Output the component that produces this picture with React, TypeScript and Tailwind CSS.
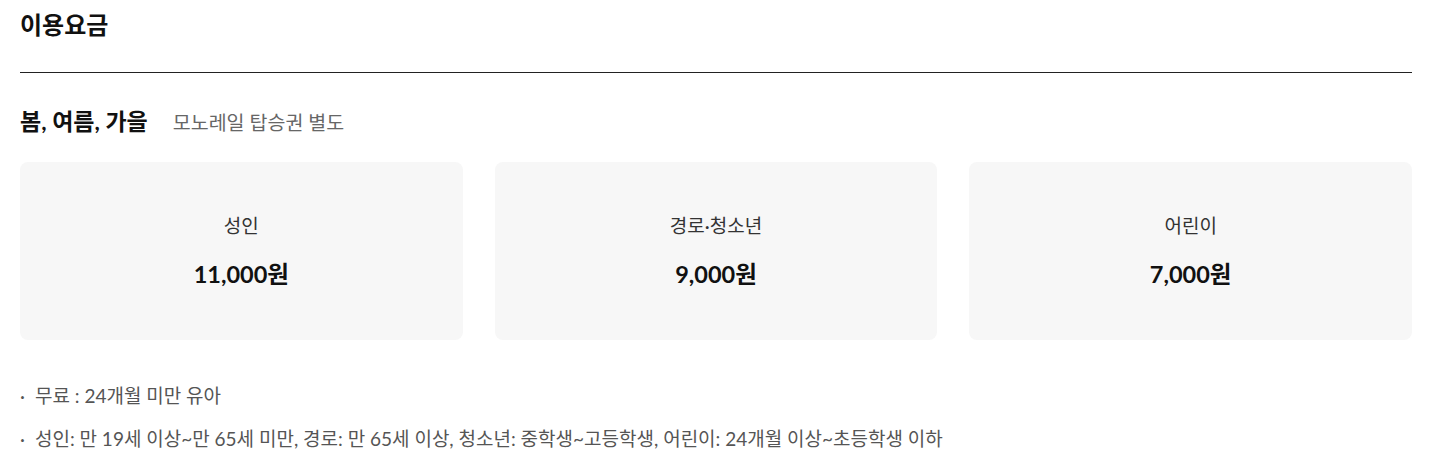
import React from "react";

const font = { fontFamily: "Lato, 'Noto Sans CJK KR', sans-serif" };

const cards = [
  { label: "성인", price: "11,000원" },
  { label: "경로·청소년", price: "9,000원" },
  { label: "어린이", price: "7,000원" },
];

export default function App() {
  return (
    <div className="w-[1435px] h-[474px] bg-white pl-[20px] pr-[23px] text-[#222]" style={font}>
      <h2 className="pt-[8px] text-[24px] font-bold leading-[34px] text-[#111]">이용요금</h2>
      <div className="mt-[30px] h-px bg-[#222]" />
      <div className="mt-[33px] flex items-baseline gap-[25px]">
        <h3 className="text-[23px] font-bold leading-[30px] text-[#111]">봄, 여름, 가을</h3>
        <span className="text-[19.5px] text-[#666]">모노레일 탑승권 별도</span>
      </div>
      <div className="mt-[25px] grid grid-cols-3 gap-[32px]">
        {cards.map((c) => (
          <div key={c.label} className="h-[178px] rounded-[8px] bg-[#f7f7f7] flex flex-col items-center justify-center">
            <div className="text-[19px] leading-[26px] text-[#333]">{c.label}</div>
            <div className="mt-[20px] text-[23.5px] font-bold leading-[30px] text-[#111]">{c.price}</div>
          </div>
        ))}
      </div>
      <ul className="mt-[43px] flex flex-col gap-[17px] text-[19px] text-[#555] leading-[26px]">
        <li className="flex gap-[10px]"><span>·</span><span>무료 : 24개월 미만 유아</span></li>
        <li className="flex gap-[10px]"><span>·</span><span>성인: 만 19세 이상~만 65세 미만, 경로: 만 65세 이상, 청소년: 중학생~고등학생, 어린이: 24개월 이상~초등학생 이하</span></li>
      </ul>
    </div>
  );
}
